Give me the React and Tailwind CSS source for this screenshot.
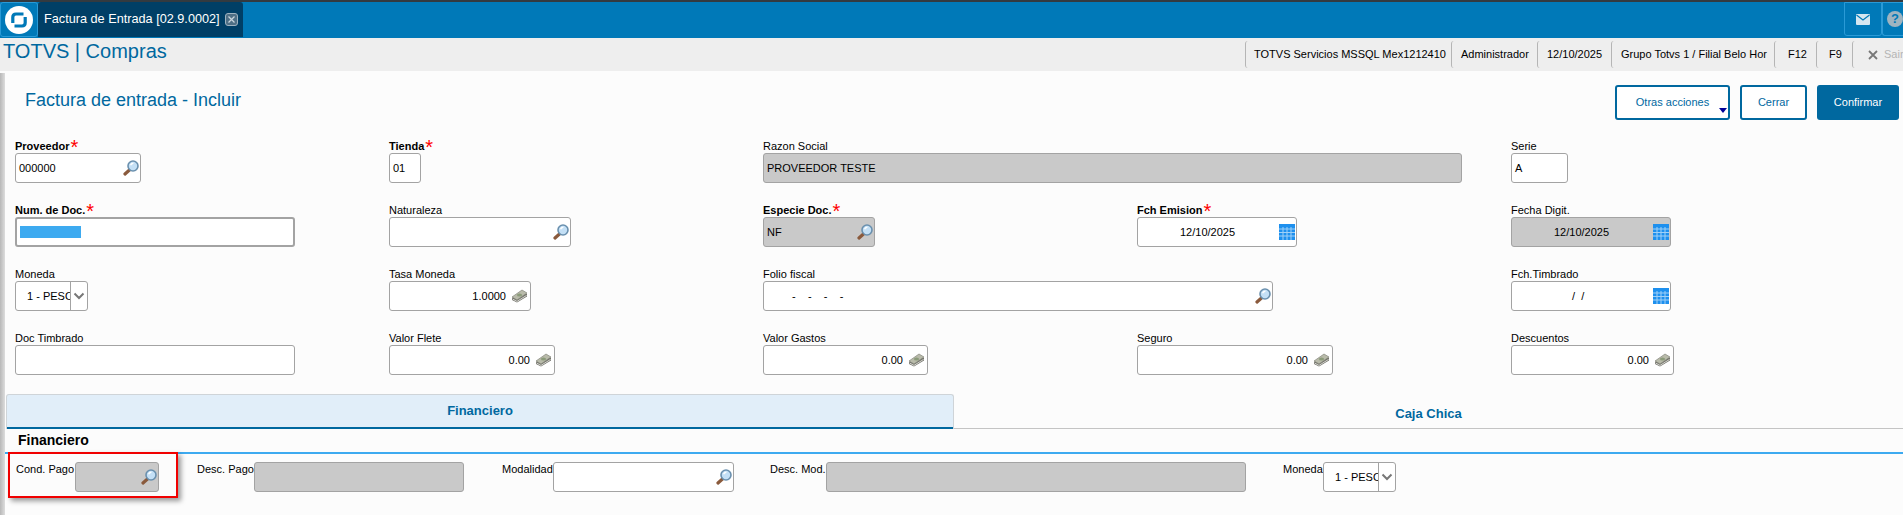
import React from 'react';

const MagnifierIcon = () => (
  <svg width="16" height="16" viewBox="0 0 16 16" className="shrink-0">
    <path d="M7 9.5 L2 14" stroke="#8a5a3c" strokeWidth="3.2" strokeLinecap="round" />
    <circle cx="10" cy="6" r="5" fill="#c4e0f6" stroke="#6a90ae" strokeWidth="1.6" />
    <path d="M7.6 5.2 A2.8 2.8 0 0 1 10.4 3.2" stroke="#ffffff" strokeWidth="1.4" fill="none" />
  </svg>
);

const MoneyIcon = () => (
  <svg width="17" height="14" viewBox="0 0 17 14" className="shrink-0">
    <path d="M1 9 L11 2 L16 5 L16 7.5 L6 13.5 L1 11 Z" fill="#707068" />
    <path d="M1 8 L11 1 L16 4 L6 11 Z" fill="#b9bbaa" stroke="#85867c" strokeWidth="0.7" />
    <ellipse cx="8.5" cy="6" rx="2.6" ry="1.6" fill="#8b9b7a" />
    <path d="M1.5 10 L6 12.4 L15.6 6.4" stroke="#e2e2dc" strokeWidth="0.9" fill="none" />
  </svg>
);

const CalendarIcon = () => (
  <svg width="16" height="16" viewBox="0 0 16 16" className="shrink-0">
    <rect width="16" height="16" fill="#1e90ee" />
    <path d="M0 5H16M0 8.5H16M0 12H16M4 3V16M8 3V16M12 3V16" stroke="#9fd0f7" strokeWidth="1" />
  </svg>
);

const TotvsLogo = () => (
  <svg width="28" height="28" viewBox="0 0 28 28">
    <circle cx="14" cy="14" r="14" fill="#ffffff" />
    <path d="M18.5 8 H11 Q7.8 8 7.8 11.2 V17" stroke="#0079b8" strokeWidth="3.2" fill="none" />
    <path d="M9.5 20 H17 Q20.2 20 20.2 16.8 V11" stroke="#0079b8" strokeWidth="3.2" fill="none" />
  </svg>
);

const Chevron = () => (
  <svg width="12" height="8" viewBox="0 0 12 8">
    <path d="M1.5 1.5 L6 6 L10.5 1.5" stroke="#777777" strokeWidth="2" fill="none" />
  </svg>
);

const Label = ({ children, required }) => (
  <div className={`h-[14px] text-[11px] leading-[14px] text-black whitespace-nowrap ${required ? 'font-bold' : ''}`}>
    {children}
    {required && <span className="text-[20px] leading-[14px] font-normal text-[#ff0000] ml-[1px] align-[-4px]">*</span>}
  </div>
);

const Box = ({ className = '', disabled, children }) => (
  <div className={`h-[30px] flex items-center border border-[#a3a3a3] rounded-[3px] text-[11px] text-black ${disabled ? 'bg-[#c9c9c9]' : 'bg-white'} ${className}`}>
    {children}
  </div>
);

const SelectBox = ({ className = '', chevron }) => (
  <Box className={`overflow-hidden ${className}`}>
    <span className="flex-1 pl-[11px] overflow-hidden whitespace-nowrap">1 - PESOS</span>
    <span className={`h-full border-l border-[#a3a3a3] flex items-center justify-center ${chevron}`}>
      <Chevron />
    </span>
  </Box>
);

const MoneyField = ({ label, value, width }) => (
  <div>
    <Label>{label}</Label>
    <Box className={`${width} justify-end pr-[2px] gap-[5px]`}>
      {value}
      <MoneyIcon />
    </Box>
  </div>
);

export default function App() {
  return (
    <div className="h-[515px] w-full overflow-hidden bg-[#fcfcfc] font-['Liberation_Sans',Arial,sans-serif] relative">
      {/* Top bar */}
      <div className="h-[2px] bg-[#333a40]" />
      <div className="h-[36px] bg-[#0079b8] flex items-stretch">
        <div className="w-[38px] h-[35px] flex items-center justify-center border border-[#2a9ad6] rounded-[3px] bg-[#0079b8]">
          <TotvsLogo />
        </div>
        <div className="w-[205px] h-[35px] bg-[#003f66] rounded-t-[3px] flex items-center pl-[6px] text-[12.7px] text-white whitespace-nowrap">
          Factura de Entrada [02.9.0002]
          <span className="ml-[5px] w-[13px] h-[13px] border border-[#9fb3c0] rounded-[3px] bg-[#4f6f85] flex items-center justify-center">
            <svg width="7" height="7" viewBox="0 0 7 7">
              <path d="M0.5 0.5 L6.5 6.5 M6.5 0.5 L0.5 6.5" stroke="#c8d4dc" strokeWidth="1.3" />
            </svg>
          </span>
        </div>
        <div className="flex-1" />
        <div className="w-[38px] h-[34px] border border-[#2a9ad6] rounded-b-[3px] flex items-center justify-center">
          <svg width="14" height="11" viewBox="0 0 14 11">
            <rect width="14" height="11" rx="1" fill="#d5e6f0" />
            <path d="M0.5 1 L7 6 L13.5 1" stroke="#0079b8" strokeWidth="1.2" fill="none" />
          </svg>
        </div>
        <div className="w-[21px] h-[34px] border border-r-0 border-[#2a9ad6] rounded-bl-[3px] flex items-center pl-[4px] overflow-hidden">
          <span className="w-[16px] h-[16px] shrink-0 rounded-full bg-[#9fb4c0] text-[#0079b8] text-[13px] font-bold leading-[16px] text-center">?</span>
        </div>
      </div>

      {/* Sub bar */}
      <div className="h-[33px] bg-[#eeeeee] flex items-center justify-between">
        <div className="pl-[3px] text-[20px] leading-[26px] text-[#00689f] -mt-[8px]">TOTVS | Compras</div>
        <div className="flex items-center h-[27px] text-[11px] text-black whitespace-nowrap">
          <div className="w-[206px] h-full flex items-center pl-[8px] border-l border-[#b5b5b5] rounded-l-[3px]">TOTVS Servicios MSSQL Mex1212410</div>
          <div className="w-[86px] h-full flex items-center pl-[9px] border-l border-[#b5b5b5] rounded-l-[3px]">Administrador</div>
          <div className="w-[74px] h-full flex items-center pl-[9px] border-l border-[#b5b5b5] rounded-l-[3px]">12/10/2025</div>
          <div className="w-[163px] h-full flex items-center pl-[9px] border-l border-[#b5b5b5] rounded-l-[3px] overflow-hidden">Grupo Totvs 1 / Filial Belo Hor</div>
          <div className="w-[42px] h-full flex items-center pl-[13px] border-l border-[#b5b5b5] rounded-l-[3px]">F12</div>
          <div className="w-[36px] h-full flex items-center pl-[12px] border-l border-[#b5b5b5] rounded-l-[3px]">F9</div>
          <div className="w-[51px] h-full flex items-center pl-[15px] gap-[6px] border-l border-[#b5b5b5] rounded-l-[3px] text-[#b5b5b5] overflow-hidden">
            <svg width="10" height="10" viewBox="0 0 10 10" className="shrink-0">
              <path d="M1 1 L9 9 M9 1 L1 9" stroke="#777777" strokeWidth="1.8" />
            </svg>
            Sair
          </div>
        </div>
      </div>

      <div className="h-[444px] flex pt-[2px]">
        <div className="w-[5px] shrink-0 bg-gradient-to-r from-[#b8b8b8] to-[#dddddd]" />
        <div className="flex-1 min-w-0 bg-[#fcfcfc]">
          {/* Title and actions */}
          <div className="h-[66px] flex items-start justify-between">
            <h1 className="pl-[20px] pt-[15px] text-[18px] leading-[24px] font-normal text-[#00689f]">Factura de entrada - Incluir</h1>
            <div className="flex pt-[12px] pr-[4px] text-[11px]">
              <button className="relative w-[115px] h-[35px] border-2 border-[#00689f] rounded-[3px] bg-white text-[#00689f]">
                Otras acciones
                <span className="absolute right-[1px] bottom-[5px] border-x-[4px] border-t-[5px] border-x-transparent border-t-[#000099]" />
              </button>
              <button className="ml-[10px] w-[67px] h-[35px] border-2 border-[#00689f] rounded-[3px] bg-white text-[#00689f]">Cerrar</button>
              <button className="ml-[10px] w-[82px] h-[35px] rounded-[3px] bg-[#00689f] text-white">Confirmar</button>
            </div>
          </div>

          {/* Form */}
          <div className="pl-[10px] grid grid-cols-[374px_374px_374px_374px_1fr] auto-rows-[64px]">
            <div>
              <Label required>Proveedor</Label>
              <Box className="w-[126px] pl-[3px] pr-[1px] justify-between">000000<MagnifierIcon /></Box>
            </div>
            <div>
              <Label required>Tienda</Label>
              <Box className="w-[32px] pl-[3px]">01</Box>
            </div>
            <div className="col-span-2">
              <Label>Razon Social</Label>
              <Box disabled className="w-[699px] pl-[3px] text-[#4a4a4a]">PROVEEDOR TESTE</Box>
            </div>
            <div>
              <Label>Serie</Label>
              <Box className="w-[57px] pl-[3px]">A</Box>
            </div>

            <div>
              <Label required>Num. de Doc.</Label>
              <Box className="w-[280px] border-2 border-[#999999] pl-[3px]">
                <span className="block w-[61px] h-[12px] bg-[#3daaf0]" />
              </Box>
            </div>
            <div>
              <Label>Naturaleza</Label>
              <Box className="w-[182px] justify-end pr-[1px]"><MagnifierIcon /></Box>
            </div>
            <div>
              <Label required>Especie Doc.</Label>
              <Box disabled className="w-[112px] pl-[3px] pr-[1px] justify-between text-[#4a4a4a]">NF<MagnifierIcon /></Box>
            </div>
            <div>
              <Label required>Fch Emision</Label>
              <Box className="w-[160px] pl-[42px] justify-between pr-[1px]">12/10/2025<CalendarIcon /></Box>
            </div>
            <div>
              <Label>Fecha Digit.</Label>
              <Box disabled className="w-[160px] pl-[42px] justify-between pr-[1px] text-[#4a4a4a]">12/10/2025<CalendarIcon /></Box>
            </div>

            <div>
              <Label>Moneda</Label>
              <SelectBox className="w-[73px]" chevron="w-[17px]" />
            </div>
            <MoneyField label="Tasa Moneda" value="1.0000" width="w-[142px]" />
            <div>
              <Label>Folio fiscal</Label>
              <Box className="w-[510px] pl-[28px] pr-[1px] justify-between">
                <span className="whitespace-pre">-    -    -    -</span>
                <MagnifierIcon />
              </Box>
            </div>
            <div />
            <div>
              <Label>Fch.Timbrado</Label>
              <Box className="w-[160px] pl-[60px] justify-between pr-[1px]">
                <span className="whitespace-pre">/  /</span>
                <CalendarIcon />
              </Box>
            </div>

            <div>
              <Label>Doc Timbrado</Label>
              <Box className="w-[280px]" />
            </div>
            <MoneyField label="Valor Flete" value="0.00" width="w-[166px]" />
            <MoneyField label="Valor Gastos" value="0.00" width="w-[165px]" />
            <MoneyField label="Seguro" value="0.00" width="w-[196px]" />
            <MoneyField label="Descuentos" value="0.00" width="w-[163px]" />
          </div>

          {/* Tabs */}
          <div className="-mt-[1px] ml-[1px] flex h-[35px] border-b border-[#c4c4c4] text-[13px] font-bold text-[#00689f]">
            <div className="w-[948px] h-[35px] bg-[#e1eef9] border border-b-0 border-[#cfd4d8] rounded-t-[3px] flex items-center justify-center relative pb-[2px]">
              Financiero
              <span className="absolute left-0 right-0 bottom-0 h-[2px] bg-[#00689f]" />
            </div>
            <div className="flex-1 flex items-center justify-center pt-[6px]">Caja Chica</div>
          </div>

          {/* Financiero section */}
          <div className="pl-[13px] h-[25px] text-[14px] leading-[23px] font-bold text-black border-b-2 border-[#3daaf0]">Financiero</div>
          <div className="pt-[8px] flex items-start text-[11px] text-black">
            <span className="ml-[11px] w-[59px] leading-[14px] whitespace-nowrap">Cond. Pago</span>
            <Box disabled className="w-[84px] justify-end pr-[1px]"><MagnifierIcon /></Box>
            <span className="ml-[38px] w-[57px] leading-[14px] whitespace-nowrap">Desc. Pago</span>
            <Box disabled className="w-[210px]" />
            <span className="ml-[38px] w-[51px] leading-[14px] whitespace-nowrap">Modalidad</span>
            <Box className="w-[181px] justify-end pr-[1px]"><MagnifierIcon /></Box>
            <span className="ml-[36px] w-[56px] leading-[14px] whitespace-nowrap">Desc. Mod.</span>
            <Box disabled className="w-[420px]" />
            <span className="ml-[37px] w-[40px] leading-[14px] whitespace-nowrap">Moneda</span>
            <SelectBox className="w-[73px]" chevron="w-[17px]" />
          </div>
        </div>
      </div>

      {/* Red annotation drawn over the screenshot */}
      <div className="absolute left-[8px] top-[452px] w-[170px] h-[46px] border-2 border-[#f00000] shadow-[3px_3px_5px_rgba(0,0,0,0.4)]" />
    </div>
  );
}
